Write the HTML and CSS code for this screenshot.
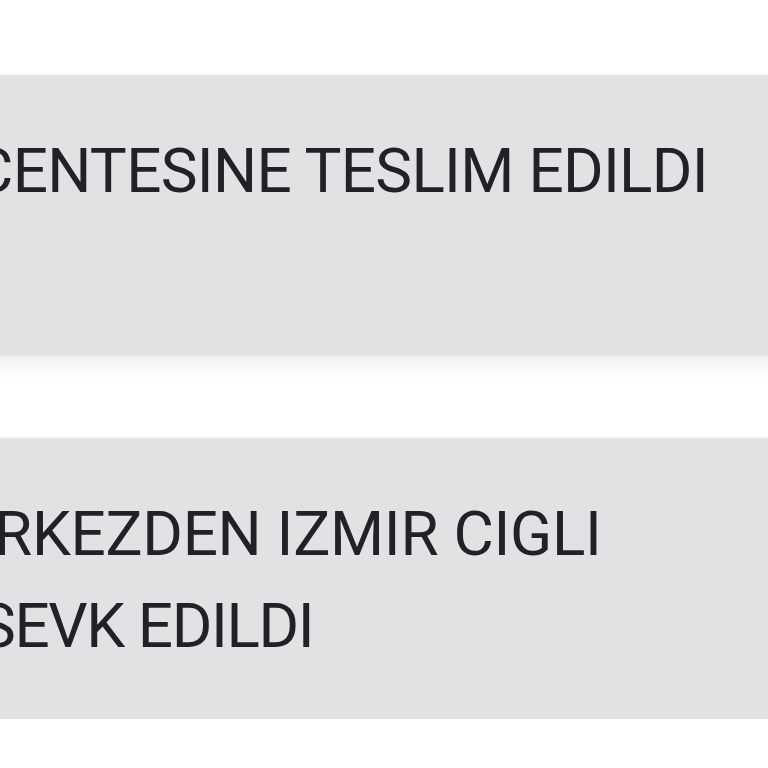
FILE: index.html
```html
<!DOCTYPE html>
<html>
  <head>
    <title>Kargo Takip</title>
    <link rel="stylesheet" href="styles.css">
  </head>
  <body>
    <div class="timeline">
      <div class="event-card">
        <div class="event-text line-first">CENTESINE TESLIM EDILDI</div>
      </div>
      <div class="event-card">
        <div class="event-text line-second">RKEZDEN IZMIR CIGLI</div>
        <div class="event-text line-third">SEVK EDILDI</div>
      </div>
    </div>
  </body>
</html>
```

FILE: styles.css
```css
html, body {
  margin: 0;
  padding: 0;
  background-color: #ffffff;
  overflow: hidden;
}
body {
  font-family: Roboto, "Noto Sans", sans-serif;
  color: #202326;
}
.timeline {
  display: flex;
  flex-direction: column;
  gap: 82px;
  padding-top: 75px;
  margin: 0 -20px;
}
.event-card {
  background-color: #e1e2e4;
  height: 281px;
  box-sizing: border-box;
  padding: 50px 0 0 20px;
  box-shadow: 0 10px 16px rgba(130, 150, 160, 0.14), 0 -1px 2px rgba(120, 130, 140, 0.08);
}
.event-text {
  font-size: 62px;
  line-height: 92px;
  white-space: nowrap;
}
.line-first {
  margin-left: -27px;
  letter-spacing: -0.7px;
}
.line-second {
  margin-left: -6px;
  letter-spacing: -0.3px;
}
.line-third {
  margin-left: -21px;
  letter-spacing: -1.4px;
}
```
